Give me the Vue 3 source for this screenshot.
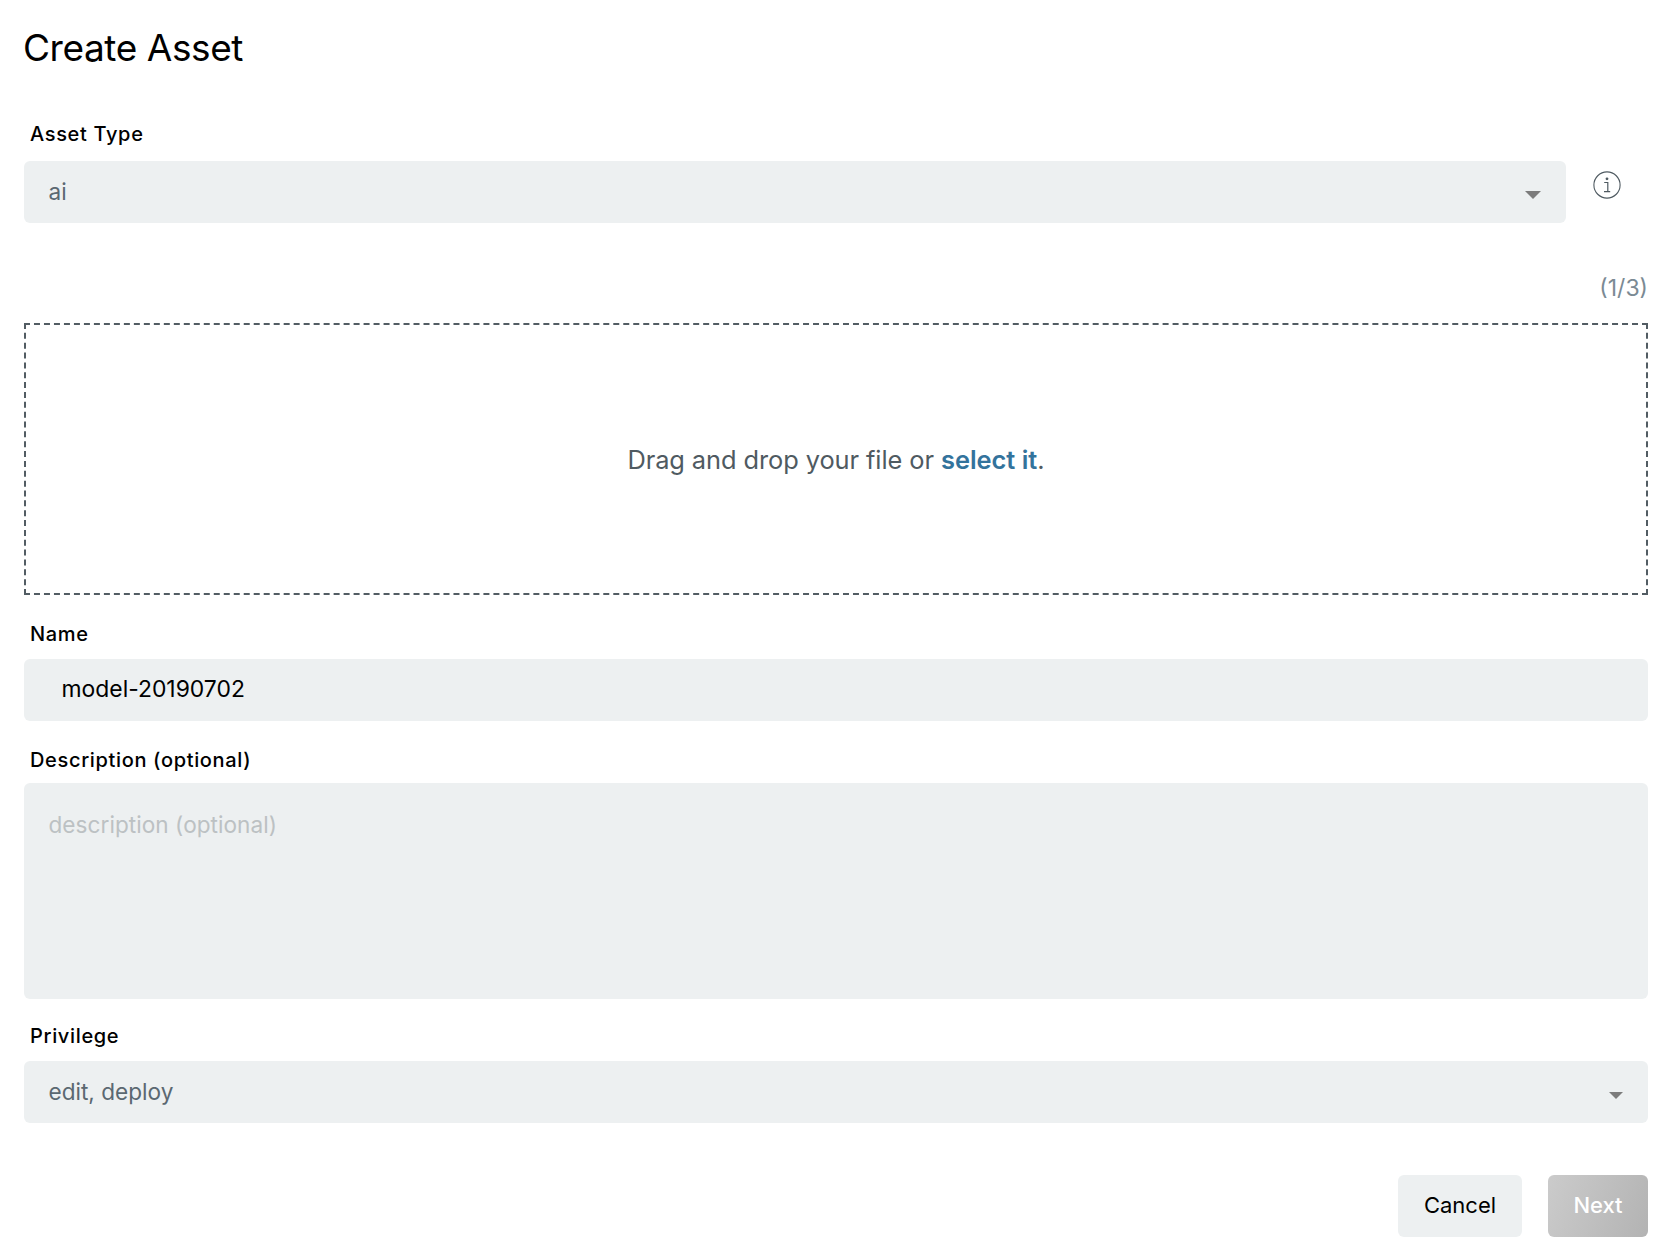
<script setup>
const title = 'Create Asset'
</script>

<template>
  <div class="page">
    <h1 class="title">{{ title }}</h1>
    <div class="field type-field">
      <label class="label">Asset Type</label>
      <div class="type-row">
        <div class="control select">
          <span class="value">ai</span>
          <span class="caret"></span>
        </div>
        <svg class="info" width="28" height="28" viewBox="0 0 28 28" fill="none">
          <circle cx="14" cy="14" r="13.1" stroke="#4f5a61" stroke-width="1.1" />
          <circle cx="14" cy="7.8" r="1.4" fill="#4f5a61" />
          <path d="M11.2 11.5h3.6v9M11 20.7h6.2" stroke="#4f5a61" stroke-width="1.2" />
        </svg>
      </div>
    </div>
    <div class="counter">(1/3)</div>
    <div class="drop">
      <span>Drag and drop your file or <a class="link">select it</a>.</span>
    </div>
    <div class="field name-field">
      <label class="label">Name</label>
      <div class="control name">model-20190702</div>
    </div>
    <div class="field desc-field">
      <label class="label">Description (optional)</label>
      <div class="control area">description (optional)</div>
    </div>
    <div class="field priv-field">
      <label class="label">Privilege</label>
      <div class="control select">
        <span class="value">edit, deploy</span>
        <span class="caret small"></span>
      </div>
    </div>
    <div class="actions">
      <button class="btn cancel">Cancel</button>
      <button class="btn next">Next</button>
    </div>
  </div>
</template>

<style>
html, body { margin: 0; background: #fff; }
</style>

<style scoped>
.page {
  box-sizing: border-box;
  width: 1678px;
  height: 1258px;
  padding: 25px 30px 0 24px;
  font-family: Inter, "Liberation Sans", sans-serif;
  color: #000;
  overflow: hidden;
}
.title {
  margin: 0 0 0 -1px;
  font-size: 37px;
  line-height: 46px;
  font-weight: 400;
  letter-spacing: -0.42px;
}
.type-field { margin-top: 51px; }
.field { display: flex; flex-direction: column; }
.label {
  display: block;
  margin-left: 6px;
  height: 25px;
  margin-bottom: 12px;
  font-size: 20px;
  line-height: 25px;
  font-weight: 500;
  letter-spacing: 0.66px;
}
.type-field .label { margin-bottom: 14px; }
.desc-field .label { margin-bottom: 10px; }
.type-row { display: flex; align-items: flex-start; }
.type-row .control { width: 1542px; flex: none; }
.info { margin: 10px 0 0 27px; flex: none; }
.control {
  box-sizing: border-box;
  background: #edf0f1;
  border-radius: 6px;
  font-size: 22.6px;
}
.select {
  height: 62px;
  display: flex;
  align-items: center;
  justify-content: space-between;
  padding: 0 25px 0 24.5px;
  color: #5b6871;
}
.value { position: relative; top: -1px; }
.caret {
  width: 0;
  height: 0;
  border-left: 8px solid transparent;
  border-right: 8px solid transparent;
  border-top: 8px solid #7c7c7c;
  position: relative;
  top: 3px;
}
.caret.small {
  border-left-width: 7.5px;
  border-right-width: 7.5px;
  border-top-width: 7.5px;
}
.counter {
  margin-top: 53px;
  height: 24px;
  line-height: 24px;
  font-size: 23px;
  text-align: right;
  color: #7b8a94;
}
.drop {
  box-sizing: border-box;
  margin-top: 23px;
  height: 272px;
  border: 2px dashed #525c63;
  display: flex;
  align-items: center;
  justify-content: center;
  font-size: 25.4px;
  letter-spacing: -0.08px;
  color: #4f5a61;
}
.link { color: #33739c; font-weight: 600; letter-spacing: 0; }
.name-field { margin-top: 27px; }
.name {
  height: 62px;
  display: flex;
  align-items: center;
  padding: 0 37.5px 2px;
  font-size: 22.9px;
  color: #000;
}
.desc-field { margin-top: 27px; }
.area {
  height: 216px;
  padding: 27px 24.5px;
  color: #bcc1c3;
  line-height: 30px;
  letter-spacing: 0.04px;
}
.priv-field { margin-top: 25px; }
.actions {
  display: flex;
  justify-content: flex-end;
  gap: 26px;
  margin-top: 52px;
}
.btn {
  height: 62px;
  border: 0;
  border-radius: 6px;
  font-family: inherit;
  font-size: 22px;
  padding: 0 0 2px;
}
.cancel { width: 124px; background: #edf0f1; color: #000; }
.next {
  width: 100px;
  background: linear-gradient(110deg, #cbcbcb, #b3b3b3);
  color: #fff;
  font-weight: 500;
}
</style>
